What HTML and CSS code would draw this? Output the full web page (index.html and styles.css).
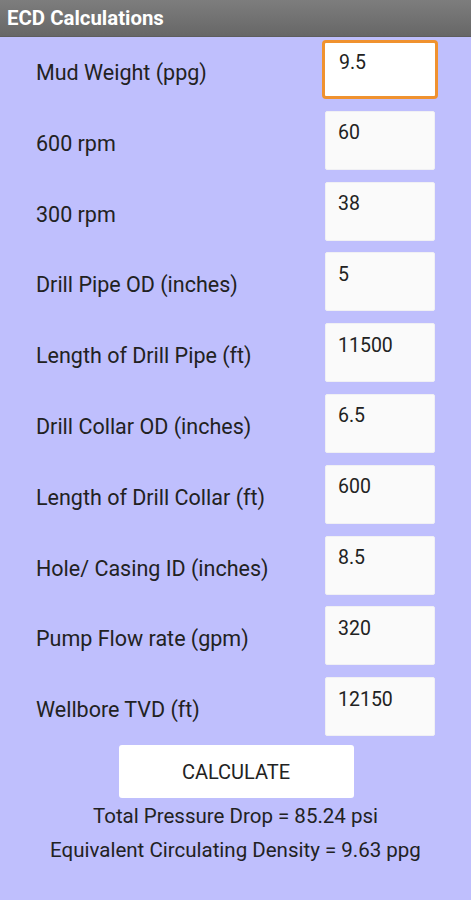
FILE: index.html
```html
<!DOCTYPE html>
<html lang="en">

<head>
    <meta charset="UTF-8" />
    <meta name="viewport" content="width=device-width, initial-scale=1.0" />
    <title>ECD Calculations</title>
    <link rel="stylesheet" href="styles.css">
</head>

<body>
    <div class="titlebar">ECD Calculations</div>

    <div class="form">
        <div class="row">
            <label for="mw">Mud Weight (ppg)</label>
            <input type="text" id="mw" class="focused" value="9.5" />
        </div>
        <div class="row">
            <label for="r600">600 rpm</label>
            <input type="text" id="r600" value="60" />
        </div>
        <div class="row">
            <label for="r300">300 rpm</label>
            <input type="text" id="r300" value="38" />
        </div>
        <div class="row">
            <label for="dpod">Drill Pipe OD (inches)</label>
            <input type="text" id="dpod" value="5" />
        </div>
        <div class="row">
            <label for="dplen">Length of Drill Pipe (ft)</label>
            <input type="text" id="dplen" value="11500" />
        </div>
        <div class="row">
            <label for="dcod">Drill Collar OD (inches)</label>
            <input type="text" id="dcod" value="6.5" />
        </div>
        <div class="row">
            <label for="dclen">Length of Drill Collar (ft)</label>
            <input type="text" id="dclen" value="600" />
        </div>
        <div class="row">
            <label for="hole">Hole/ Casing ID (inches)</label>
            <input type="text" id="hole" value="8.5" />
        </div>
        <div class="row">
            <label for="flow">Pump Flow rate (gpm)</label>
            <input type="text" id="flow" value="320" />
        </div>
        <div class="row">
            <label for="tvd">Wellbore TVD (ft)</label>
            <input type="text" id="tvd" value="12150" />
        </div>
    </div>

    <div class="actions">
        <button class="calc">CALCULATE</button>
        <p class="result">Total Pressure Drop = 85.24 psi</p>
        <p class="result">Equivalent Circulating Density = 9.63 ppg</p>
    </div>
</body>

</html>
```

FILE: styles.css
```css
* {
    box-sizing: border-box;
    font-family: Roboto, "Noto Sans", sans-serif;
}

body {
    margin: 0;
    height: 900px;
    background-color: #bfbffd;
    color: #222;
}

.titlebar {
    height: 37px;
    padding: 6px 7px 0;
    background: linear-gradient(#7d7d7d, #676767);
    border-bottom: 1px solid #5e5e5e;
    color: #fff;
    font-size: 20.4px;
    font-weight: 700;
}

.form {
    display: flex;
    flex-direction: column;
    gap: 11.8px;
    padding: 3px 36px 0 36px;
}

.row {
    display: flex;
    justify-content: space-between;
    align-items: center;
    height: 59px;
}

.row label {
    padding-top: 6px;
    font-size: 21.5px;
    color: #222;
}

.row input {
    flex: none;
    width: 110px;
    height: 59px;
    margin-right: 0;
    padding: 8px 12px 23px;
    border: 1px solid #f0f0f4;
    border-radius: 2px;
    background: #fafafa;
    font-size: 19.5px;
    color: #222;
    outline: none;
}

.row input.focused {
    width: 116px;
    margin-right: -3px;
    padding-left: 14px;
    border: 3px solid #f0922f;
    border-radius: 4px;
    background: #fff;
}

.actions {
    display: flex;
    flex-direction: column;
    align-items: center;
    padding-top: 9px;
}

.calc {
    width: 235px;
    height: 53px;
    margin-left: 1px;
    border: none;
    border-radius: 3px;
    background: #fff;
    font-size: 20px;
    color: #222;
}

.result {
    margin: 0;
    font-size: 20.5px;
    line-height: 34px;
}

.result:first-of-type {
    margin-top: 1px;
}
```
